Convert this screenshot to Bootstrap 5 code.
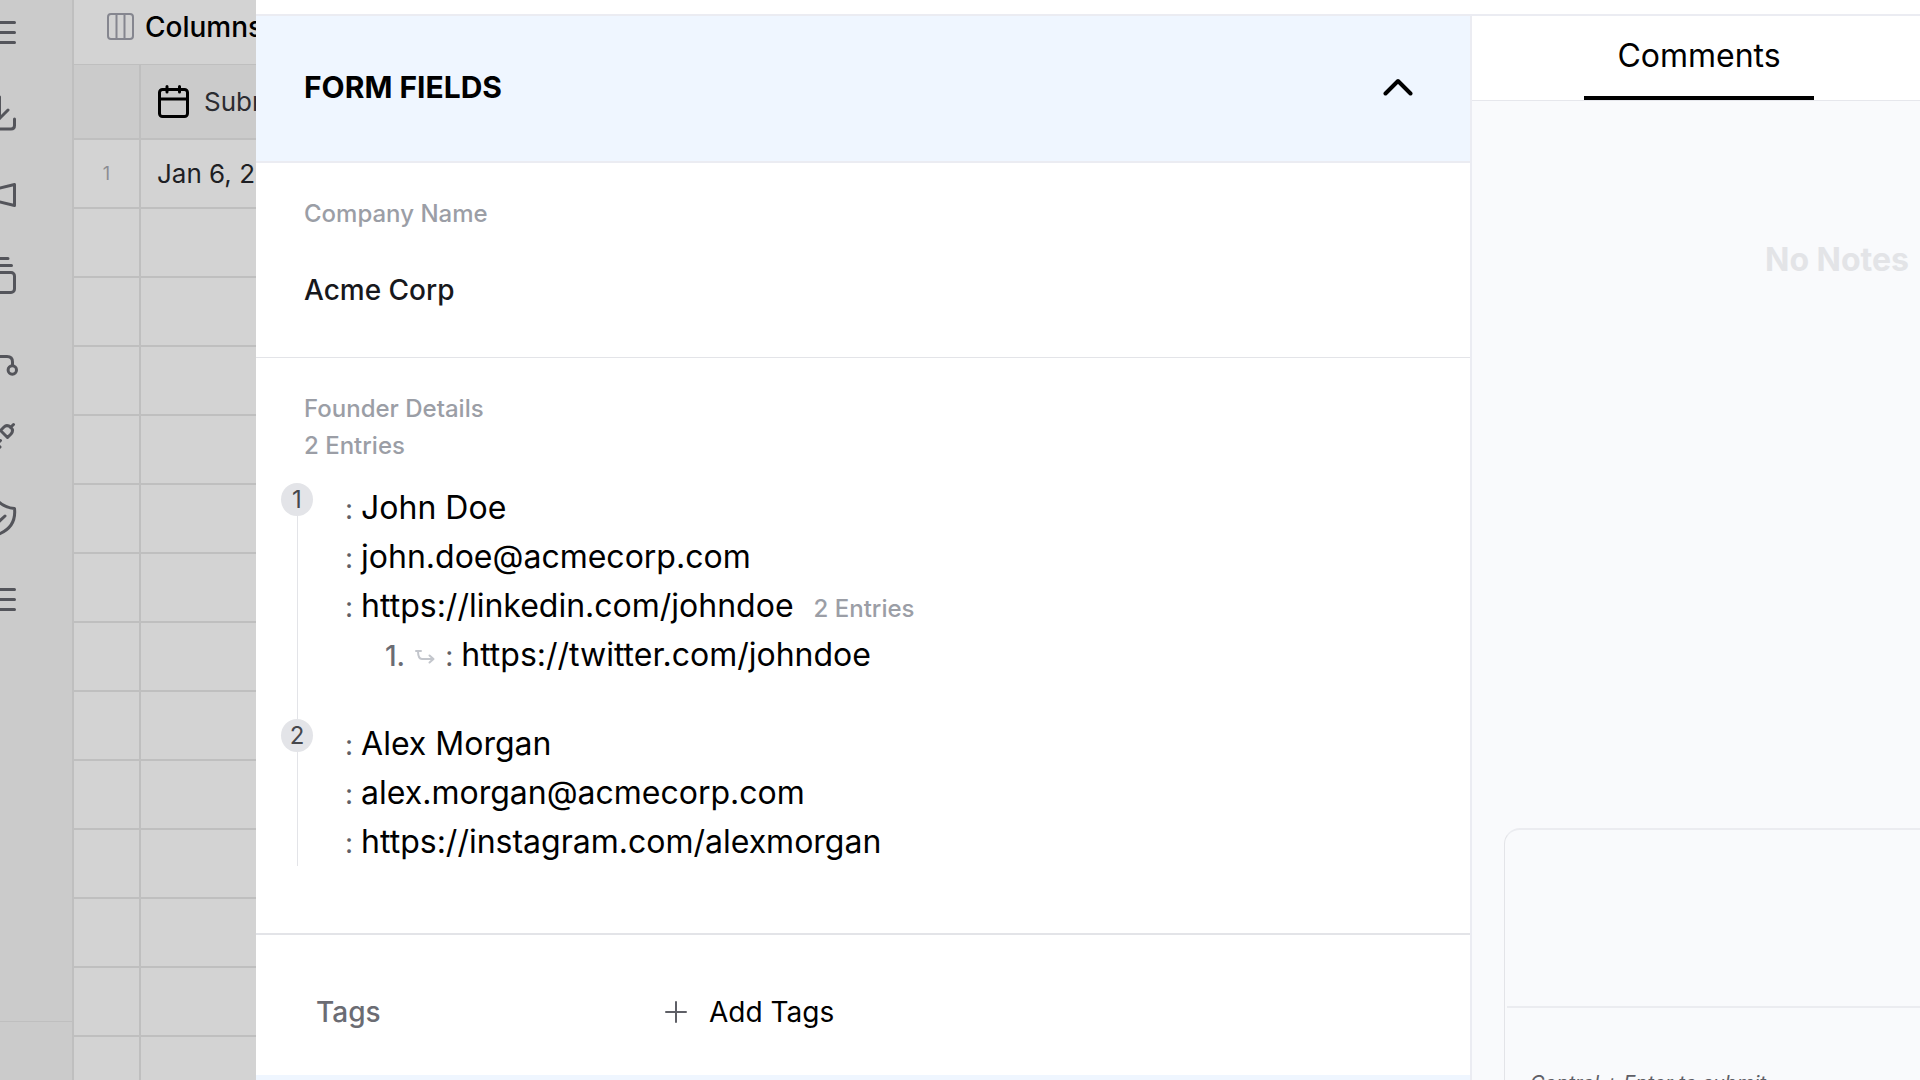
<!DOCTYPE html>
<html lang="en">
<head>
<meta charset="utf-8">
<meta name="viewport" content="width=device-width, initial-scale=1">
<title>Submission details</title>
<link href="https://cdn.jsdelivr.net/npm/bootstrap@5.3.0/dist/css/bootstrap.min.css" rel="stylesheet">
<style>
  body { font-family: Inter, "Liberation Sans", sans-serif; color: #000; background: #d3d3d3; }
  svg { fill: none; stroke: currentColor; stroke-linecap: round; stroke-linejoin: round; display: block; }

  /* dimmed page behind the drawer */
  .backdrop-page { width: 256px; background: #d3d3d3; }
  .side-nav { width: 74px; background: #cbcbcb; border-right: 2px solid #bfbfbf; }
  .side-icons { gap: 41px; padding-top: 12px; margin-left: -20px; color: #54555b; }
  .side-icons button, .plain-btn { background: none; border: 0; padding: 0; color: inherit; }
  .side-icons svg { width: 40px; height: 40px; stroke-width: 3; }
  .side-foot { height: 59px; border-top: 1px solid #bfbfbf; }
  .toolbar-row { height: 65px; padding: 0 0 10px 33px; border-bottom: 1px solid #bfbfbf; }
  .toolbar-row button { gap: 10px; font-size: 28px; line-height: 36px; font-weight: 500; }
  .toolbar-row svg { color: #85868f; }
  .sheet { table-layout: fixed; width: 420px; border-collapse: separate; border-spacing: 0; }
  .sheet th, .sheet td { border-bottom: 2px solid #bfbfbf; height: 69px; padding: 0 0 0 16px; font-size: 26px; line-height: 32px; font-weight: 400; white-space: nowrap; color: #1e1f24; }
  .sheet th { height: 75px; background: #cbcbcb; color: #2b2c31; }
  .sheet th svg { color: #000; margin-right: 15px; }
  .sheet .num-col { width: 67px; border-right: 2px solid #bfbfbf; padding: 0; text-align: center; font-size: 18px; color: #8b8c92; }

  /* drawer */
  .drawer-top { height: 16px; border-bottom: 2px solid #ebecf2; }
  .sect-head { height: 147px; padding: 0 57px 3px 48px; background: #eff6ff; border-bottom: 2px solid #ebecf2; }
  .sect-head h2 { font-size: 30px; line-height: 40px; font-weight: 700; margin: 0; }
  .field-block { padding: 32px 48px 47px; border-bottom: 1px solid #e3e4e8; }
  .field-label { font-size: 24px; line-height: 37px; color: #9b9ea6; margin: 0; font-weight: 500; }
  .field-value { font-size: 28px; line-height: 40px; color: #17181c; margin: 38px 0 0; font-weight: 500; }
  .founders { padding-bottom: 67px; border-bottom: 2px solid #e3e4e8; }
  .entry-list { margin: 19px 0 0 -23px; padding: 0; list-style: none; }
  .rail { width: 32px; }
  .rail-num { width: 32px; height: 33px; border-radius: 50%; background: #e3e4e8; color: #46474c; font-size: 24px; line-height: 33px; text-align: center; }
  .rail-line { width: 1px; background: #e3e4e8; }
  .entry-body { padding-left: 32px; }
  .entry:not(:last-child) .entry-body { padding-bottom: 40px; }
  .entry-line { gap: 8px; font-size: 32px; line-height: 49px; }
  .entry-line .sep { font-size: 28px; line-height: 32px; color: #5e5f66; }
  .entry-line .count { font-size: 24px; line-height: 32px; font-weight: 500; color: #9b9ea6; margin-left: 12px; }
  .sub-line { padding-left: 40px; }
  .sub-line .ord { font-size: 28px; line-height: 32px; font-weight: 500; color: #6b6c73; }
  .sub-line svg { width: 20px; height: 16px; margin: 0 2px; color: #c3c6cc; }
  .tags-row { padding: 56px 48px 42px 60px; font-size: 28px; line-height: 42px; }
  .tags-name { width: 348px; font-weight: 500; color: #6b6c73; }
  .tags-row button { gap: 21px; line-height: 42px; }
  .tags-row svg { color: #5e5f66; }

  /* comments */
  .comments-pane { flex: 0 0 450px; background: #f9fafc; border-left: 2px solid #ebecf2; }
  .comments-inner { width: 730px; }
  .tab-strip { height: 85px; padding-left: 112px; background: #fff; border-bottom: 1px solid #e6e7ec; }
  .tab-strip button { width: 230px; font-size: 32px; line-height: 48px; padding-bottom: 16px; border-bottom: 4px solid #000; }
  .no-notes { padding-top: 135px; font-size: 32px; line-height: 48px; font-weight: 700; color: #e3e4e7; }
  .composer { margin: 0 32px -60px; border: 1px solid #e3e4e8; border-top: 2px solid #ebecf0; border-radius: 16px; }
  .composer textarea { height: 178px; margin: 0 2px; border: 0; border-bottom: 2px solid #ebecf0; background: none; resize: none; width: calc(100% - 4px); display: block; outline: 0; }
  .composer-hint { padding: 59px 25px 40px; font-size: 20px; line-height: 32px; color: #5e5f66; font-style: italic; }
</style>
</head>
<body>
<div class="d-flex vh-100 overflow-hidden">

  <div class="backdrop-page d-flex flex-shrink-0 overflow-hidden">
    <nav class="side-nav d-flex flex-column justify-content-between flex-shrink-0 overflow-hidden" aria-label="Form">
      <div class="side-icons d-flex flex-column align-items-start">
        <button type="button" aria-label="Menu"><svg viewBox="0 0 40 40"><path d="M5 10.5H34.5M5 20.5H34.5M5 30.5H34.5"/></svg></button>
        <button type="button" aria-label="Import"><svg viewBox="0 0 40 40"><path d="M19.5 4V25.5M11 17L19.5 25.5L28 17M34.5 26V32.500Q34.500 36 31 36H8.500Q5 36 5 32.500V26"/></svg></button>
        <button type="button" aria-label="Announce"><svg viewBox="0 0 40 40"><path d="M34.500 10.500V31.500L5 24.500V17.500Z"/></svg></button>
        <button type="button" aria-label="Collections"><svg viewBox="0 0 40 40"><path d="M11 3.500H28M8 10.500H31.500"/><rect x="5" y="17.500" width="29.500" height="20" rx="3.500"/></svg></button>
        <button type="button" aria-label="Workflow"><svg viewBox="0 0 40 40"><path d="M12 20.500H27Q32.500 20.500 32.500 26V29.500M12 20.500Q7 20.500 7 14"/><circle cx="32.300" cy="34" r="4.200"/></svg></button>
        <button type="button" aria-label="Integrations"><svg viewBox="0 0 40 40"><path d="M30.500 10.500L33.500 7.500M20.500 13.500L27.500 20.500L31 17Q34 13.500 31 10.500Q27 7 24 10Z"/><path d="M17.500 26.500L20.500 23.500M10 20L20 30L17 33Q13 36 9 32Q5 28 8 23Z"/></svg></button>
        <button type="button" aria-label="Security"><svg viewBox="0 0 40 40"><path d="M19 4Q25 9.500 34.500 10.500Q36.500 29 19 36Q2 29 4.500 10.500Q13 9.500 19 4ZM13.500 19L18 24.500L25 18"/></svg></button>
        <button type="button" aria-label="List"><svg viewBox="0 0 40 40"><path d="M5 10.500H34.500M5 20.500H34.500M5 30.500H34.500"/></svg></button>
      </div>
      <div class="side-foot"></div>
    </nav>

    <div class="flex-grow-1 overflow-hidden">
      <div class="toolbar-row d-flex align-items-center">
        <button type="button" class="plain-btn d-flex align-items-center"><svg width="28" height="28" viewBox="0 0 28 28" stroke-width="2"><rect x="1" y="1" width="25" height="25" rx="3"/><path d="M9.500 1V26M17.500 1V26"/></svg>Columns</button>
      </div>
      <table class="sheet">
        <thead>
          <tr><th class="num-col"></th><th><span class="d-flex align-items-center"><svg width="32" height="34" viewBox="0 0 32 34" stroke-width="3"><rect x="2.500" y="4.500" width="28" height="27" rx="3"/><path d="M2.500 14H30.500M10 1.500V7M22.500 1.500V7"/></svg>Submission Date</span></th></tr>
        </thead>
        <tbody>
          <tr><td class="num-col">1</td><td>Jan 6, 2025</td></tr>
          <tr><td class="num-col"></td><td></td></tr>
          <tr><td class="num-col"></td><td></td></tr>
          <tr><td class="num-col"></td><td></td></tr>
          <tr><td class="num-col"></td><td></td></tr>
          <tr><td class="num-col"></td><td></td></tr>
          <tr><td class="num-col"></td><td></td></tr>
          <tr><td class="num-col"></td><td></td></tr>
          <tr><td class="num-col"></td><td></td></tr>
          <tr><td class="num-col"></td><td></td></tr>
          <tr><td class="num-col"></td><td></td></tr>
          <tr><td class="num-col"></td><td></td></tr>
          <tr><td class="num-col"></td><td></td></tr>
          <tr><td class="num-col"></td><td></td></tr>
        </tbody>
      </table>
    </div>
  </div>

  <div class="bg-white flex-grow-1 d-flex flex-column overflow-hidden">
    <div class="drawer-top flex-shrink-0"></div>
    <div class="d-flex flex-grow-1 overflow-hidden">

      <main class="flex-grow-1 overflow-hidden">
        <button type="button" class="plain-btn sect-head w-100 d-flex align-items-center justify-content-between" aria-expanded="true">
          <h2>FORM FIELDS</h2>
          <svg width="30" height="18" viewBox="0 0 30 18" stroke-width="4"><path d="M2.500 15.500L15 3L27.500 15.500"/></svg>
        </button>

        <section class="field-block">
          <h3 class="field-label">Company Name</h3>
          <p class="field-value">Acme Corp</p>
        </section>

        <section class="field-block founders">
          <h3 class="field-label">Founder Details</h3>
          <p class="field-label">2 Entries</p>
          <ol class="entry-list">
            <li class="entry d-flex">
              <div class="rail d-flex flex-column align-items-center"><span class="rail-num">1</span><span class="rail-line flex-grow-1"></span></div>
              <div class="entry-body">
                <div class="entry-line d-flex align-items-baseline"><span class="sep">:</span><span>John Doe</span></div>
                <div class="entry-line d-flex align-items-baseline"><span class="sep">:</span><span>john.doe@acmecorp.com</span></div>
                <div class="entry-line d-flex align-items-baseline"><span class="sep">:</span><span>https://linkedin.com/johndoe</span><span class="count">2 Entries</span></div>
                <div class="entry-line sub-line d-flex align-items-baseline"><span class="ord">1.</span><svg viewBox="0 0 20 16" stroke-width="2"><path d="M1 1H6M3 1Q3 9 7 9H17M14.500 5.500L18.500 9L14.500 12.500"/></svg><span class="sep">:</span><span>https://twitter.com/johndoe</span></div>
              </div>
            </li>
            <li class="entry d-flex">
              <div class="rail d-flex flex-column align-items-center"><span class="rail-num">2</span><span class="rail-line flex-grow-1"></span></div>
              <div class="entry-body">
                <div class="entry-line d-flex align-items-baseline"><span class="sep">:</span><span>Alex Morgan</span></div>
                <div class="entry-line d-flex align-items-baseline"><span class="sep">:</span><span>alex.morgan@acmecorp.com</span></div>
                <div class="entry-line d-flex align-items-baseline"><span class="sep">:</span><span>https://instagram.com/alexmorgan</span></div>
              </div>
            </li>
          </ol>
        </section>

        <section class="tags-row d-flex">
          <span class="tags-name">Tags</span>
          <button type="button" class="plain-btn d-flex align-items-center"><svg width="24" height="24" viewBox="0 0 24 24" stroke-width="2"><path d="M12 2V22M2 12H22"/></svg>Add Tags</button>
        </section>
        <div class="sect-head"></div>
      </main>

      <aside class="comments-pane overflow-hidden">
        <div class="comments-inner h-100 d-flex flex-column">
          <div class="tab-strip d-flex align-items-end flex-shrink-0" role="tablist">
            <button type="button" class="plain-btn tab-btn" role="tab" aria-selected="true">Comments</button>
          </div>
          <div class="no-notes flex-grow-1 text-center">No Notes</div>
          <div class="composer flex-shrink-0">
            <textarea aria-label="Write a comment"></textarea>
            <div class="composer-hint">Control + Enter to submit</div>
          </div>
        </div>
      </aside>
    </div>
  </div>
</div>
<script src="https://cdn.jsdelivr.net/npm/bootstrap@5.3.0/dist/js/bootstrap.bundle.min.js"></script>
</body>
</html>
